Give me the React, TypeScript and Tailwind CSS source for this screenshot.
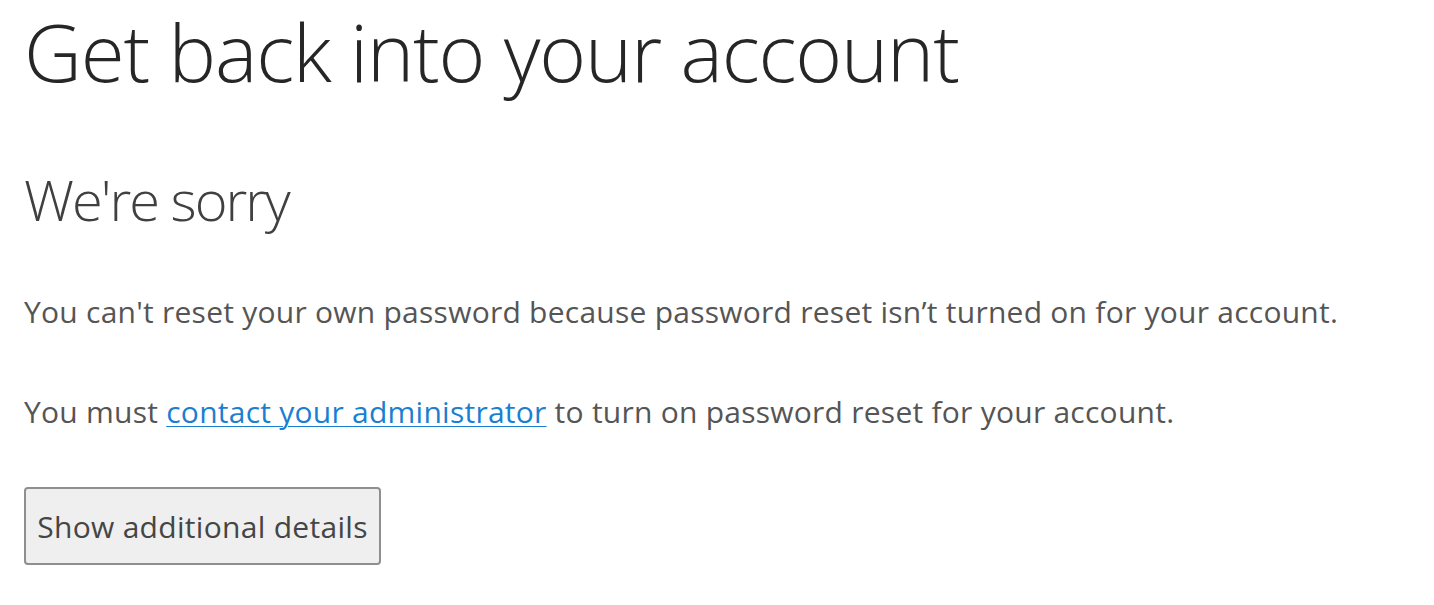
export default function App() {
  return (
    <div
      className="min-h-[605px] w-full bg-white pl-[24px] pt-[3px]"
      style={{ fontFamily: '"Open Sans", "Noto Sans", sans-serif' }}
    >
      <h1 className="text-[80px] font-light leading-[1.2] tracking-[-1.2px] text-[#262626]">
        Get back into your account
      </h1>
      <h2 className="mt-[72px] text-[56px] font-light leading-none tracking-[-2px] text-[#404040]">
        We're sorry
      </h2>
      <p className="mt-[70px] text-[30px] leading-none tracking-[0.25px] text-[#555555]">
        You can't reset your own password because password reset isn’t turned on for your account.
      </p>
      <p className="mt-[70px] text-[30px] leading-none tracking-[0.25px] text-[#555555]">
        You must{" "}
        <a href="#" className="text-[#1a7fd0] underline underline-offset-[3px] decoration-1">
          contact your administrator
        </a>{" "}
        to turn on password reset for your account.
      </p>
      <button className="mt-[60px] h-[78px] w-[357px] rounded-[4px] border-2 border-[#8f8f8f] bg-[#efefef] text-[30px] tracking-[0.3px] text-[#454545]">
        Show additional details
      </button>
    </div>
  );
}
